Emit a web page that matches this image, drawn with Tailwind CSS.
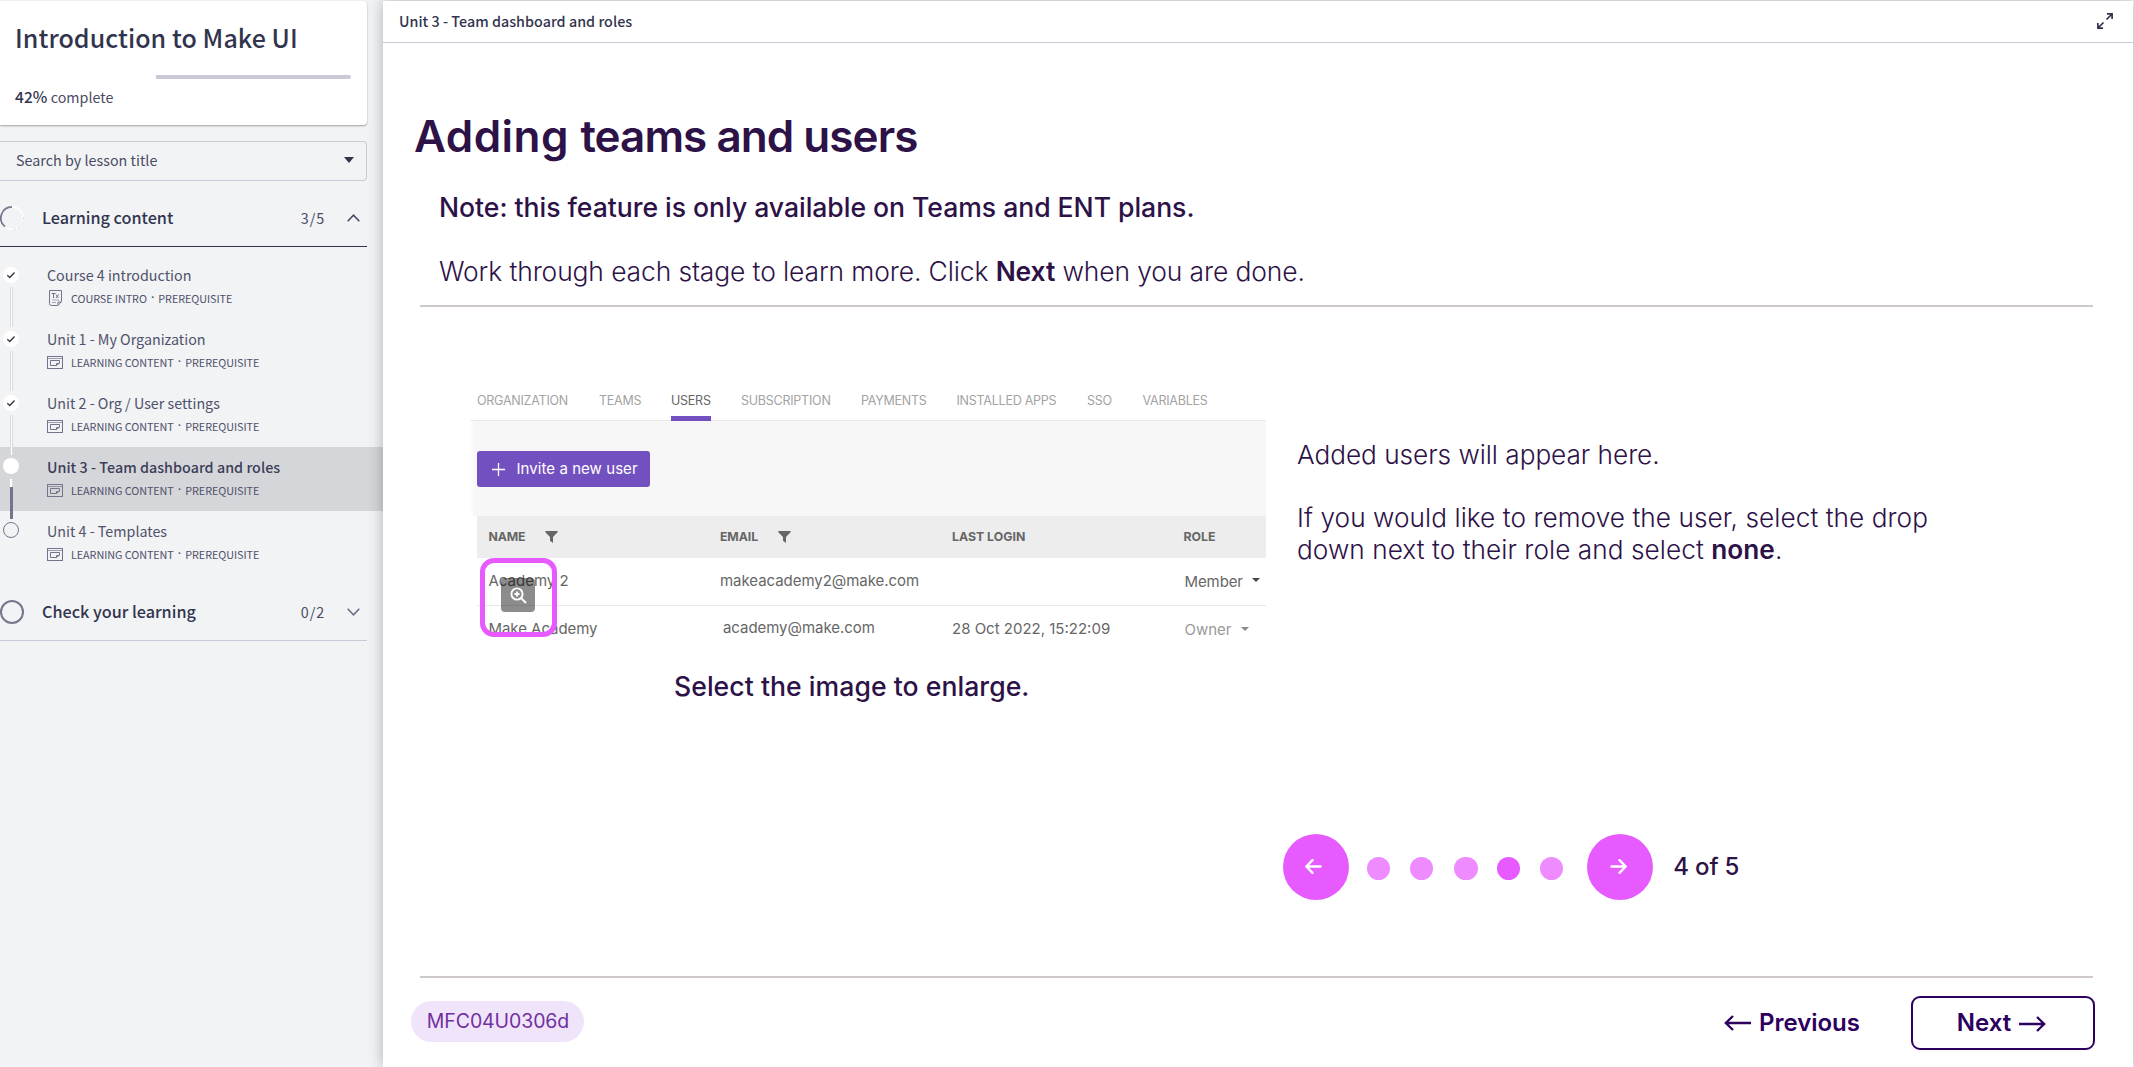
<!DOCTYPE html>
<html lang="en">
<head>
<meta charset="utf-8">
<title>Introduction to Make UI</title>
<script src="https://cdn.jsdelivr.net/npm/@tailwindcss/browser@4"></script>
</head>
<body class="h-[1067px] overflow-hidden bg-[#f1f3f5]">
<svg class="hidden">
  <symbol id="lesson" viewBox="0 0 16 13"><g fill="none" stroke="currentColor"><rect x=".5" y=".5" width="15" height="12"/><path d="M.5 2.500h15" opacity=".7"/><path d="M9.500 9.500h-6v-5h9v2.500l-3 2.500v-2h3"/></g></symbol>
  <symbol id="filter" viewBox="0 0 13 12"><path fill="currentColor" d="M.5 0h12q.5.600 0 1.200L8 6v6L5 9.800V6L.400 1.200Q0 .600.500 0z"/></symbol>
  <symbol id="check" viewBox="0 0 16 16"><circle cx="8" cy="8" r="8" fill="#fff"/><path d="M4.300 8.200l2.500 2.300 4.700-5" fill="none" stroke="#32344a" stroke-width="1.300"/></symbol>
</svg>
<div class="flex h-full pt-px">

  <aside class="w-[383px] shrink-0 font-['Noto_Sans_CJK_SC',sans-serif] text-[14.3px] leading-5 text-[#4a4b63]">
    <div class="h-[124px] w-[367px] rounded-r-[4px] bg-white pl-[15px] pt-[20px] shadow-[0_1px_2px_rgba(0,0,0,0.35)]">
      <h1 class="text-[25px] font-medium leading-8 tracking-[0.06px] text-[#32344e]">Introduction to Make UI</h1>
      <div class="ml-[141px] mt-[22px] h-1 w-[195px] rounded-r-full bg-[#c9c9d7]"></div>
      <p class="mt-[7px]"><b class="text-[15.5px] font-medium tracking-[0.1px] text-[#32344e]">42%</b> complete</p>
    </div>
    <div class="mt-[16px] flex h-10 w-[367px] items-center justify-between rounded-r-[4px] border border-l-0 border-[#c9c9d7] pb-0.5 pl-[16px] pr-[12px]">
      <span class="tracking-[0.02px]">Search by lesson title</span>
      <svg class="h-[6px] w-[10px] text-[#32344e]" viewBox="0 0 10 6"><path fill="currentColor" d="M0 0h10L5 6z"/></svg>
    </div>

    <div class="mt-2 flex h-[58px] w-[367px] items-center border-b border-[#32344e]">
      <svg class="h-6 w-6" viewBox="0 0 24 24" fill="none"><circle cx="12" cy="12" r="11.300" stroke="#fff" stroke-width="1.500"/><path d="M13 23.500A11.500 11.500 0 0 0 23.500 11" stroke="#d3d3dc" stroke-width=".8" stroke-dasharray="3 2"/><path d="M12 .900A11.100 11.100 0 0 0 5 20.600" stroke="#74748c" stroke-width="1.800"/></svg>
      <h2 class="ml-[18px] pb-0.5 text-[16.2px] font-medium text-[#32344e]">Learning content</h2>
      <span class="ml-auto tracking-[0.9px]">3/5</span>
      <svg class="ml-[22px] mr-[7px] h-[8px] w-[13px] text-[#4a4b63]" viewBox="0 0 13 8"><path d="M.700 7.200l5.800-6 5.800 6" fill="none" stroke="currentColor" stroke-width="1.600"/></svg>
    </div>

    <ul class="mt-2 text-[#50516a]">
      <li class="relative h-16 pl-[47px] pt-[10px]">
        <svg class="absolute left-[3px] top-[12px] size-4"><use href="#check"/></svg>
        <i class="absolute left-[10px] top-8 z-10 h-10 w-[3px] border-x border-[#d9dade] bg-white"></i>
        <p>Course 4 introduction</p>
        <p class="mt-[5px] flex items-center text-[10.8px] leading-4 tracking-[-0.06px]"><svg class="ml-[2px] mr-[9px] h-[16px] w-[13px] text-[#74748c]" viewBox="0 0 13 16" fill="none" stroke="currentColor"><path d="M8.500 15.500h-6q-2 0-2-2v-13h12v11l-3.500 4v-3.500h3.500"/><path d="M3 10h7M3 12.500h4" opacity=".6"/><path d="M2.500 3.500h4M4.500 3.500V8M7 4.500l2.500 3.500M9.500 4.500L7 8"/></svg>COURSE INTRO<span class="w-[11.5px] text-center font-['Inter',sans-serif] font-semibold">·</span>PREREQUISITE</p>
      </li>
      <li class="relative h-16 pl-[47px] pt-[10px]">
        <svg class="absolute left-[3px] top-[12px] size-4"><use href="#check"/></svg>
        <i class="absolute left-[10px] top-8 z-10 h-10 w-[3px] border-x border-[#d9dade] bg-white"></i>
        <p>Unit 1 - My Organization</p>
        <p class="mt-[5px] flex items-center text-[10.8px] leading-4 tracking-[-0.06px]"><svg class="mr-[8px] h-[13px] w-[16px] text-[#74748c]"><use href="#lesson"/></svg>LEARNING CONTENT<span class="w-[11.5px] text-center font-['Inter',sans-serif] font-semibold">·</span>PREREQUISITE</p>
      </li>
      <li class="relative h-16 pl-[47px] pt-[10px]">
        <svg class="absolute left-[3px] top-[12px] size-4"><use href="#check"/></svg>
        <i class="absolute left-[10px] top-8 z-10 h-10 w-[3px] border-x border-[#d9dade] bg-white"></i>
        <p>Unit 2 - Org / User settings</p>
        <p class="mt-[5px] flex items-center text-[10.8px] leading-4 tracking-[-0.06px]"><svg class="mr-[8px] h-[13px] w-[16px] text-[#74748c]"><use href="#lesson"/></svg>LEARNING CONTENT<span class="w-[11.5px] text-center font-['Inter',sans-serif] font-semibold">·</span>PREREQUISITE</p>
      </li>
      <li class="relative h-16 bg-[#d5d6da] pl-[47px] pt-[10px]">
        <i class="absolute left-[3px] top-[11px] size-4 rounded-full bg-white"></i>
        <i class="absolute left-[10px] top-8 z-10 h-2 w-[3px] border-r border-[#d9dade] bg-white"></i>
        <i class="absolute left-[10px] top-10 z-10 h-8 w-[2.5px] bg-[#74748c]"></i>
        <p class="font-medium tracking-[0.03px] text-[#3c3d58]">Unit 3 - Team dashboard and roles</p>
        <p class="mt-[5px] flex items-center text-[10.8px] leading-4 tracking-[-0.06px]"><svg class="mr-[8px] h-[13px] w-[16px] text-[#74748c]"><use href="#lesson"/></svg>LEARNING CONTENT<span class="w-[11.5px] text-center font-['Inter',sans-serif] font-semibold">·</span>PREREQUISITE</p>
      </li>
      <li class="relative h-16 pl-[47px] pt-[10px]">
        <i class="absolute left-[3px] top-[11px] size-4 rounded-full border border-[#74748c]"></i>
        <p>Unit 4 - Templates</p>
        <p class="mt-[5px] flex items-center text-[10.8px] leading-4 tracking-[-0.06px]"><svg class="mr-[8px] h-[13px] w-[16px] text-[#74748c]"><use href="#lesson"/></svg>LEARNING CONTENT<span class="w-[11.5px] text-center font-['Inter',sans-serif] font-semibold">·</span>PREREQUISITE</p>
      </li>
    </ul>

    <div class="mt-2 flex h-[58px] w-[367px] items-center border-b border-[#c9c9d7]">
      <i class="size-6 rounded-full border-2 border-[#74778c]"></i>
      <h2 class="ml-[18px] pb-0.5 text-[16.2px] font-medium text-[#32344e]">Check your learning</h2>
      <span class="ml-auto tracking-[0.9px]">0/2</span>
      <svg class="ml-[22px] mr-[7px] h-[8px] w-[13px] text-[#6d7086]" viewBox="0 0 13 8"><path d="M.700.800l5.800 6 5.800-6" fill="none" stroke="currentColor" stroke-width="1.600"/></svg>
    </div>
  </aside>

  <main class="z-20 w-[1750px] shrink-0 bg-white font-['Inter',sans-serif] text-[#2d1247] shadow-[0_0_14px_rgba(0,0,0,0.28)]">
    <header class="flex h-[42px] items-center justify-between border-b border-[#c9c9d7] pl-4 pr-[20px] font-['Noto_Sans_CJK_SC',sans-serif] text-[14.3px] font-medium leading-5 text-[#32344e]">
      <span class="pb-0.5 tracking-[0.03px]">Unit 3 - Team dashboard and roles</span>
      <svg class="mb-0.5 size-4" viewBox="0 0 16 16" fill="none" stroke="currentColor" stroke-width="1.700"><path d="M9.500 6.500L15 1M10 .900h5.100V6M6.500 9.500L1 15M.900 10v5.100H6"/></svg>
    </header>

    <h1 class="pl-[31px] pt-[66px] text-[44px] font-semibold leading-[54px] tracking-[-0.95px]"><span class="tracking-[0.45px]">Adding </span>teams and users</h1>
    <p class="mt-[28px] pl-[56px] text-[26.6px] font-medium leading-8 tracking-[-0.04px]">Note: this feature is only available on Teams and ENT plans.</p>
    <p class="mt-[32px] pl-[56px] text-[26.4px] font-light leading-8 tracking-[-0.1px]">Work through each stage to learn more. Click <b class="font-semibold">Next</b> when you are done.</p>
    <hr class="ml-[37px] mt-[18px] h-[2px] w-[1673px] border-0 bg-[#cfc9ca]">

    <section class="flex h-[527px] pl-[87px]">
      <div class="w-[796px] pt-[76px] text-[15px] leading-6 text-[#666]">
        <div class="relative">
          <nav class="grid h-[38px] grid-cols-[122px_72px_70px_120px_95.5px_130.5px_55.5px_1fr] border-b border-[#e9e9e9] pl-[7px] pt-[10px] text-[12.5px] leading-4 tracking-[-0.24px] text-[#a3a3a3]">
            <span>ORGANIZATION</span><span>TEAMS</span>
            <span class="mb-[-1px] mr-[30px] border-b-[5px] border-[#7350bf] text-[#666]">USERS</span>
            <span>SUBSCRIPTION</span><span>PAYMENTS</span><span>INSTALLED APPS</span><span>SSO</span><span>VARIABLES</span>
          </nav>
          <div class="h-[95px] bg-linear-to-r from-white to-[#f7f7f7] to-[5px] pl-[7px] pt-[30px]">
            <button class="flex h-[36px] w-[173px] items-center rounded-[3px] bg-[#7350bf] pl-[15px] tracking-[0.06px] text-white"><svg class="mr-[11.500px] size-[13px]" viewBox="0 0 13 13" stroke="currentColor" stroke-width="1.300"><path d="M6.500 0v13M0 6.500h13"/></svg>Invite a new user</button>
          </div>
          <div class="ml-[7px] grid h-[42px] grid-cols-[231.5px_232px_231.5px_1fr] items-center bg-[#ededed] pb-px pl-[11.5px] text-[12.3px] font-bold text-[#666]">
            <span class="flex items-center tracking-[-0.2px]">NAME<svg class="ml-[20px] h-3 w-[13px]"><use href="#filter"/></svg></span>
            <span class="flex items-center tracking-[-0.1px]">EMAIL<svg class="ml-[20px] h-3 w-[13px]"><use href="#filter"/></svg></span>
            <span>LAST LOGIN</span><span>ROLE</span>
          </div>
          <div class="ml-[7px] grid h-[48px] grid-cols-[231.5px_232px_231.5px_1fr] items-start border-b border-[#e9e9e9] pl-[11.5px] pt-[11px]">
            <span>Academy 2</span><span class="tracking-[-0.05px]">makeacademy2@make.com</span><span></span>
            <span class="flex items-center pl-px pt-px tracking-[-0.1px]">Member<svg class="mb-1 ml-[9px] h-1 w-2" viewBox="0 0 8 4"><path d="M0 0h8L4 4z" fill="#444"/></svg></span>
          </div>
          <div class="ml-[7px] grid h-[36px] grid-cols-[231.5px_232px_231.5px_1fr] items-start pl-[11.5px] pt-[11px]">
            <span class="tracking-[-0.05px]">Make Academy</span><span class="-mt-px pl-[3px] tracking-[-0.05px]">academy@make.com</span><span>28 Oct 2022, 15:22:09</span>
            <span class="mt-px flex items-center pl-px text-[#999]">Owner<svg class="mb-0.5 ml-[9px] h-1 w-2" viewBox="0 0 8 4"><path d="M0 0h8L4 4z" fill="#888"/></svg></span>
          </div>
          <div class="absolute left-[31px] top-[195px] flex size-[34px] items-center justify-center rounded-[4px] bg-black/45">
            <svg class="size-[17px]" viewBox="0 0 17 17" fill="none" stroke="#fff" stroke-width="1.900"><circle cx="7" cy="7" r="5.600"/><path d="M11 11l5 5M4.400 7h5.200M7 4.400v5.200"/></svg>
          </div>
          <div class="absolute left-[10px] top-[175px] h-[79px] w-[77px] rounded-[14px] border-[5px] border-[#e65aff]"></div>
        </div>
        <p class="mt-[28px] pl-[204px] text-[26.6px] font-medium leading-8 tracking-[0.04px] text-[#2d1247]">Select the image to enlarge.</p>
      </div>
      <div class="w-[680px] pl-[31px] pt-[132px] text-[26.2px] font-light leading-[31.8px]">
        <p class="tracking-[-0.03px]">Added users will appear here.</p>
        <p class="mt-[31.200px] tracking-[0.06px]">If you would like to remove the user, select the drop<br>down next to their role and select <b class="font-semibold">none</b>.</p>
      </div>
    </section>

    <div class="flex h-[66px] items-center pl-[900px]">
      <button class="flex size-[66px] items-center justify-center rounded-full bg-[#e65aff]"><svg class="mb-px mr-[5px] h-[15px] w-[17px]" viewBox="0 0 17 15" fill="none" stroke="#fff" stroke-width="2.400" stroke-linecap="round" stroke-linejoin="round"><path d="M15.500 7.500H1.500M7.500 1.200L1.300 7.500l6.200 6.300"/></svg></button>
      <div class="ml-[17.500px] mt-[3px] flex gap-[19.6px]">
        <i class="size-[23.6px] rounded-full bg-[#ee8bff]"></i><i class="size-[23.6px] rounded-full bg-[#ee8bff]"></i><i class="ml-[1.500px] size-[23.6px] rounded-full bg-[#ee8bff]"></i><i class="-ml-[1px] size-[23.6px] rounded-full bg-[#e65aff]"></i><i class="size-[23.6px] rounded-full bg-[#ee8bff]"></i>
      </div>
      <button class="ml-[24px] flex size-[66px] items-center justify-center rounded-full bg-[#e65aff]"><svg class="mb-px mr-[4px] h-[15px] w-[17px]" viewBox="0 0 17 15" fill="none" stroke="#fff" stroke-width="2.400" stroke-linecap="round" stroke-linejoin="round"><path d="M1.500 7.500h14M9.500 1.200l6.200 6.300-6.200 6.300"/></svg></button>
      <span class="ml-[20px] text-[24px] font-medium leading-8 tracking-[-0.2px]">4 of 5</span>
    </div>

    <hr class="ml-[37px] mt-[76px] h-[2px] w-[1673px] border-0 bg-[#cfc9ca]">
    <footer class="flex items-center pl-[28px] pr-[38px] pt-[18px] text-[24px] font-semibold text-[#2d0060]">
      <span class="mb-[3px] flex h-[41px] w-[173px] items-center justify-center rounded-full bg-[#f0e4fb] pl-px pt-px text-[19.500px] font-normal tracking-[-0.1px] text-[#7030a0]">MFC04U0306d</span>
      <a class="ml-auto mr-[51px] flex items-center gap-[8px]"><svg class="mb-px h-[16px] w-[27px]" viewBox="0 0 27 16" fill="none" stroke="currentColor" stroke-width="2.300"><path d="M27 8H2M9 1L1.800 8 9 15"/></svg>Previous</a>
      <a class="flex h-[54px] w-[184px] items-center justify-center gap-[8px] rounded-[9px] border-2 border-[#2d0060] pr-[3px]">Next<svg class="mt-[2px] h-[16px] w-[27px]" viewBox="0 0 27 16" fill="none" stroke="currentColor" stroke-width="2.300"><path d="M0 8h25M18 1l7.200 7-7.200 7"/></svg></a>
    </footer>
  </main>
</div>
</body>
</html>
